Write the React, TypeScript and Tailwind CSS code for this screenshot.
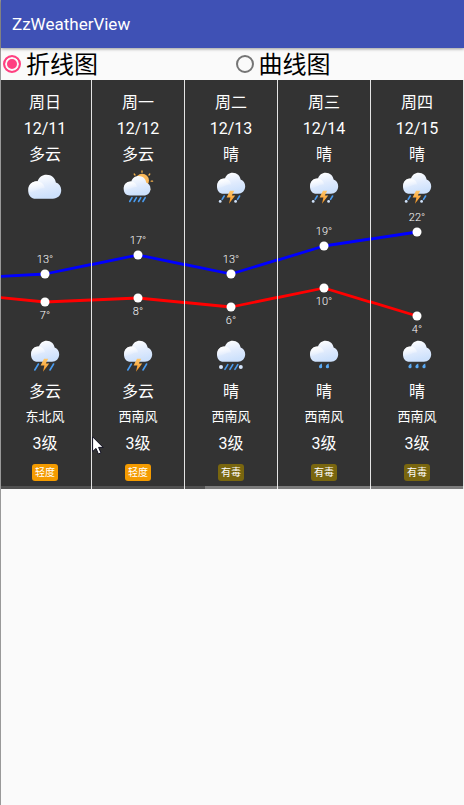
import { useId, useState } from "react";

type Sky = "cloud" | "sunRain" | "storm" | "stormSnow" | "sleet" | "drizzle" | "rain";

interface Day {
  week: string;
  date: string;
  dayText: string;
  dayIcon: Sky;
  high: number;
  low: number;
  nightIcon: Sky;
  nightText: string;
  wind: string;
  level: string;
  air: "轻度" | "有毒";
}

const days: Day[] = [
  { week: "周日", date: "12/11", dayText: "多云", dayIcon: "cloud", high: 13, low: 7, nightIcon: "storm", nightText: "多云", wind: "东北风", level: "3级", air: "轻度" },
  { week: "周一", date: "12/12", dayText: "多云", dayIcon: "sunRain", high: 17, low: 8, nightIcon: "storm", nightText: "多云", wind: "西南风", level: "3级", air: "轻度" },
  { week: "周二", date: "12/13", dayText: "晴", dayIcon: "stormSnow", high: 13, low: 6, nightIcon: "sleet", nightText: "晴", wind: "西南风", level: "3级", air: "有毒" },
  { week: "周三", date: "12/14", dayText: "晴", dayIcon: "stormSnow", high: 19, low: 10, nightIcon: "drizzle", nightText: "晴", wind: "西南风", level: "3级", air: "有毒" },
  { week: "周四", date: "12/15", dayText: "晴", dayIcon: "stormSnow", high: 22, low: 4, nightIcon: "rain", nightText: "晴", wind: "西南风", level: "3级", air: "有毒" },
];

// The day scrolled off to the left still anchors the first line segments.
const previous = { high: 12, low: 9 };

const airColor = { 轻度: "bg-[#f49b00]", 有毒: "bg-[#79660f]" };

const tempY = (t: number) => Math.round(66 - 4.72 * (t - 13));

function Cloud({ id, transform }: { id: string; transform?: string }) {
  return (
    <g transform={transform}>
      <path
        d="M12.5 25.7C8.5 25.7 6 22.8 6 18.4C6 13.4 9.4 10.3 14 10.5C15 7 18 4.7 21.6 4.7C26 4.7 29.2 7.7 29.6 11.5C32.4 12.4 34.2 15 34.2 18.3C34.2 22.8 31 25.7 27 25.7Z"
        fill={`url(#${id}-body)`}
      />
      <path
        d="M6 18.4C6 13.4 9.4 10.3 13.4 10.5C17.3 10.7 19.8 13.4 20 16.6C15.5 15.5 12.5 20 6.3 20Z"
        fill={`url(#${id}-puff)`}
      />
    </g>
  );
}

function Streak({ x, y, length = 6 }: { x: number; y: number; length?: number }) {
  return (
    <path
      d={`M${x} ${y}l${-length * 0.6} ${length}`}
      stroke="#4a9cf0"
      strokeWidth="1.6"
      strokeLinecap="round"
    />
  );
}

function Drop({ x }: { x: number }) {
  return (
    <path
      d={`M${x + 1.2} 27.4C${x - 0.6} 28.4 ${x - 1.6} 29.6 ${x - 1.6} 30.7A1.6 1.6 0 0 0 ${x + 1.6} 30.7Z`}
      fill="#58a9f5"
    />
  );
}

function Bolt({ id }: { id: string }) {
  return <path d="M19 22.8L15.6 29.6H19.4L18 35.8L24.2 27.6H20.8L23.2 22.8Z" fill={`url(#${id}-bolt)`} />;
}

function SkyIcon({ kind }: { kind: Sky }) {
  const id = useId().replace(/[^a-zA-Z0-9]/g, "");
  return (
    <svg viewBox="0 0 40 40" fill="none" className="size-10" aria-hidden="true">
      <defs>
        <linearGradient id={`${id}-body`} x1="0" y1="0" x2="0.3" y2="1">
          <stop offset="0.1" stopColor="#ffffff" />
          <stop offset="0.6" stopColor="#e0ebfd" />
          <stop offset="1" stopColor="#cde1fc" />
        </linearGradient>
        <linearGradient id={`${id}-puff`} x1="0.3" y1="0" x2="0.6" y2="1">
          <stop offset="0" stopColor="#ffffff" />
          <stop offset="1" stopColor="#ffffff" stopOpacity="0" />
        </linearGradient>
        <linearGradient id={`${id}-bolt`} x1="0" y1="0" x2="0" y2="1">
          <stop offset="0" stopColor="#ffc76b" />
          <stop offset="1" stopColor="#f7931e" />
        </linearGradient>
      </defs>

      {kind === "cloud" && <Cloud id={id} transform="translate(-3.8 1.4) scale(1.17 1.14)" />}

      {kind === "sunRain" && (
        <>
          <circle cx="24.2" cy="12.6" r="6.8" fill="#fbb95a" />
          <g stroke="#f5b049" strokeWidth="1.3" strokeLinecap="round">
            <path d="M24 2.9V4.3M16.2 6L17 7M31.8 6L31 7M33.2 13.2H34.6M31 20.4L31.9 21.2" />
          </g>
          <Cloud id={id} transform="translate(0 3.8) scale(0.95 0.92)" />
          <Streak x={14} y={29.7} length={3.8} />
          <Streak x={18.4} y={29.7} length={3.8} />
          <Streak x={22.8} y={29.7} length={3.8} />
          <Streak x={27.2} y={29.7} length={3.8} />
        </>
      )}

      {(kind === "storm" || kind === "stormSnow") && (
        <>
          <Cloud id={id} />
          {kind === "storm" ? (
            <>
              <Streak x={13.4} y={28} length={6} />
              <Streak x={28.6} y={28} length={6} />
            </>
          ) : (
            <>
              <Streak x={13.2} y={28} length={3.4} />
              <Streak x={28.6} y={28} length={3.4} />
              <circle cx="9.2" cy="33.4" r="1.4" fill="#cfe2fb" />
              <circle cx="24.6" cy="33.4" r="1.4" fill="#cfe2fb" />
            </>
          )}
          <Bolt id={id} />
        </>
      )}

      {kind === "sleet" && (
        <>
          <Cloud id={id} />
          <circle cx="10" cy="31" r="2" fill="#d5e5fc" />
          <Streak x={16.8} y={28.6} length={4.8} />
          <Streak x={21.8} y={28.6} length={4.8} />
          <Streak x={26.8} y={28.6} length={4.8} />
          <circle cx="29.8" cy="31" r="2" fill="#d5e5fc" />
        </>
      )}

      {kind === "drizzle" && (
        <>
          <Cloud id={id} />
          <Drop x={16.6} />
          <Drop x={23.4} />
        </>
      )}

      {kind === "rain" && (
        <>
          <Cloud id={id} />
          <Drop x={13} />
          <Drop x={20} />
          <Drop x={27} />
        </>
      )}
    </svg>
  );
}

interface SeriesProps {
  values: [number, number, number | null];
  color: string;
  smooth: boolean;
}

function Series({ values, color, smooth }: SeriesProps) {
  const [before, here, after] = values;
  if (smooth) {
    const left = (tempY(before) + tempY(here)) / 2;
    const right = after === null ? null : (tempY(here) + tempY(after)) / 2;
    return (
      <svg viewBox="0 0 92 128" preserveAspectRatio="none" width="100%" height="128">
        <path
          d={
            `M0 ${left}Q23 ${tempY(here)} 46 ${tempY(here)}` +
            (right === null ? "" : `Q69 ${tempY(here)} 92 ${right}`)
          }
          fill="none"
          stroke={color}
          strokeWidth="3"
        />
      </svg>
    );
  }
  return (
    <g stroke={color} strokeWidth="2.8">
      <line x1="-50%" y1={tempY(before)} x2="50%" y2={tempY(here)} />
      {after !== null && <line x1="50%" y1={tempY(here)} x2="150%" y2={tempY(after)} />}
    </g>
  );
}

function TempChart({ index, smooth }: { index: number; smooth: boolean }) {
  const day = days[index];
  const before = index > 0 ? days[index - 1] : previous;
  const after = index < days.length - 1 ? days[index + 1] : null;
  return (
    <svg className="block h-32 w-full overflow-hidden">
      <Series values={[before.high, day.high, after ? after.high : null]} color="#0000ff" smooth={smooth} />
      <Series values={[before.low, day.low, after ? after.low : null]} color="#ff0000" smooth={smooth} />
      <g fill="#ffffff" textAnchor="middle" className="text-[11px] font-light">
        <circle cx="50%" cy={tempY(day.high)} r="4.5" />
        <circle cx="50%" cy={tempY(day.low)} r="4.5" />
        <text x="50%" y={tempY(day.high) - 11}>{day.high}°</text>
        <text x="50%" y={tempY(day.low) + 17}>{day.low}°</text>
      </g>
    </svg>
  );
}

function DayColumn({ index, smooth }: { index: number; smooth: boolean }) {
  const day = days[index];
  return (
    <li className="flex flex-col items-center border-r border-[#e4e4e4] pt-2.5 pb-2 text-base leading-[26px] text-white">
      <span>{day.week}</span>
      <span>{day.date}</span>
      <span>{day.dayText}</span>
      <SkyIcon kind={day.dayIcon} />
      <TempChart index={index} smooth={smooth} />
      <SkyIcon kind={day.nightIcon} />
      <span className="mt-[3px]">{day.nightText}</span>
      <span className="pb-0.5 text-[13px] leading-6">{day.wind}</span>
      <span>{day.level}</span>
      <span className={`mt-[7px] rounded-[3px] px-[3px] text-[10px] leading-[17px] ${airColor[day.air]}`}>{day.air}</span>
    </li>
  );
}

function ModeRadio({ label, checked, onSelect }: { label: string; checked: boolean; onSelect: () => void }) {
  return (
    <label className="flex flex-1 items-center gap-[5px] pl-0.5 text-2xl leading-8 text-black">
      <input
        type="radio"
        name="line-mode"
        checked={checked}
        onChange={onSelect}
        className="size-[18px] shrink-0 appearance-none rounded-full border-2 border-[#757575] checked:border-[#ff4081] checked:bg-[#ff4081] checked:shadow-[inset_0_0_0_2px_#fafafa]"
      />
      <span className="pt-0.5">{label}</span>
    </label>
  );
}

export default function App() {
  const [smooth, setSmooth] = useState(false);
  return (
    <div className="min-h-screen border-l border-[#999999] bg-[#fafafa] font-[Roboto,'Noto_Sans_CJK_SC',sans-serif]">
      <header className="relative flex h-12 items-center bg-[#3f51b5] px-[11px] pt-0.5 shadow-[0_1px_3px_rgba(0,0,0,0.4)]">
        <h1 className="text-[17px] text-white">ZzWeatherView</h1>
      </header>

      <fieldset className="flex h-8 gap-0.5">
        <ModeRadio label="折线图" checked={!smooth} onSelect={() => setSmooth(false)} />
        <ModeRadio label="曲线图" checked={smooth} onSelect={() => setSmooth(true)} />
      </fieldset>

      <main className="relative overflow-hidden bg-[#333333]">
        <ul className="-ml-0.5 grid grid-cols-5">
          {days.map((day, index) => (
            <DayColumn key={day.date} index={index} smooth={smooth} />
          ))}
        </ul>
        <div className="absolute inset-x-0 bottom-0 flex h-[3px] bg-white/15">
          <div className="ml-[44%] flex-1 bg-white/25" />
        </div>
        <svg viewBox="0 0 12 19" className="absolute top-[356px] left-[91px] h-[19px] w-3" aria-hidden="true">
          <path
            d="M0.6 0.8V15.6L4 12.4L6.4 18L9 16.9L6.6 11.4H11.2Z"
            fill="#ffffff"
            stroke="#111122"
            strokeWidth="1"
          />
        </svg>
      </main>
    </div>
  );
}
